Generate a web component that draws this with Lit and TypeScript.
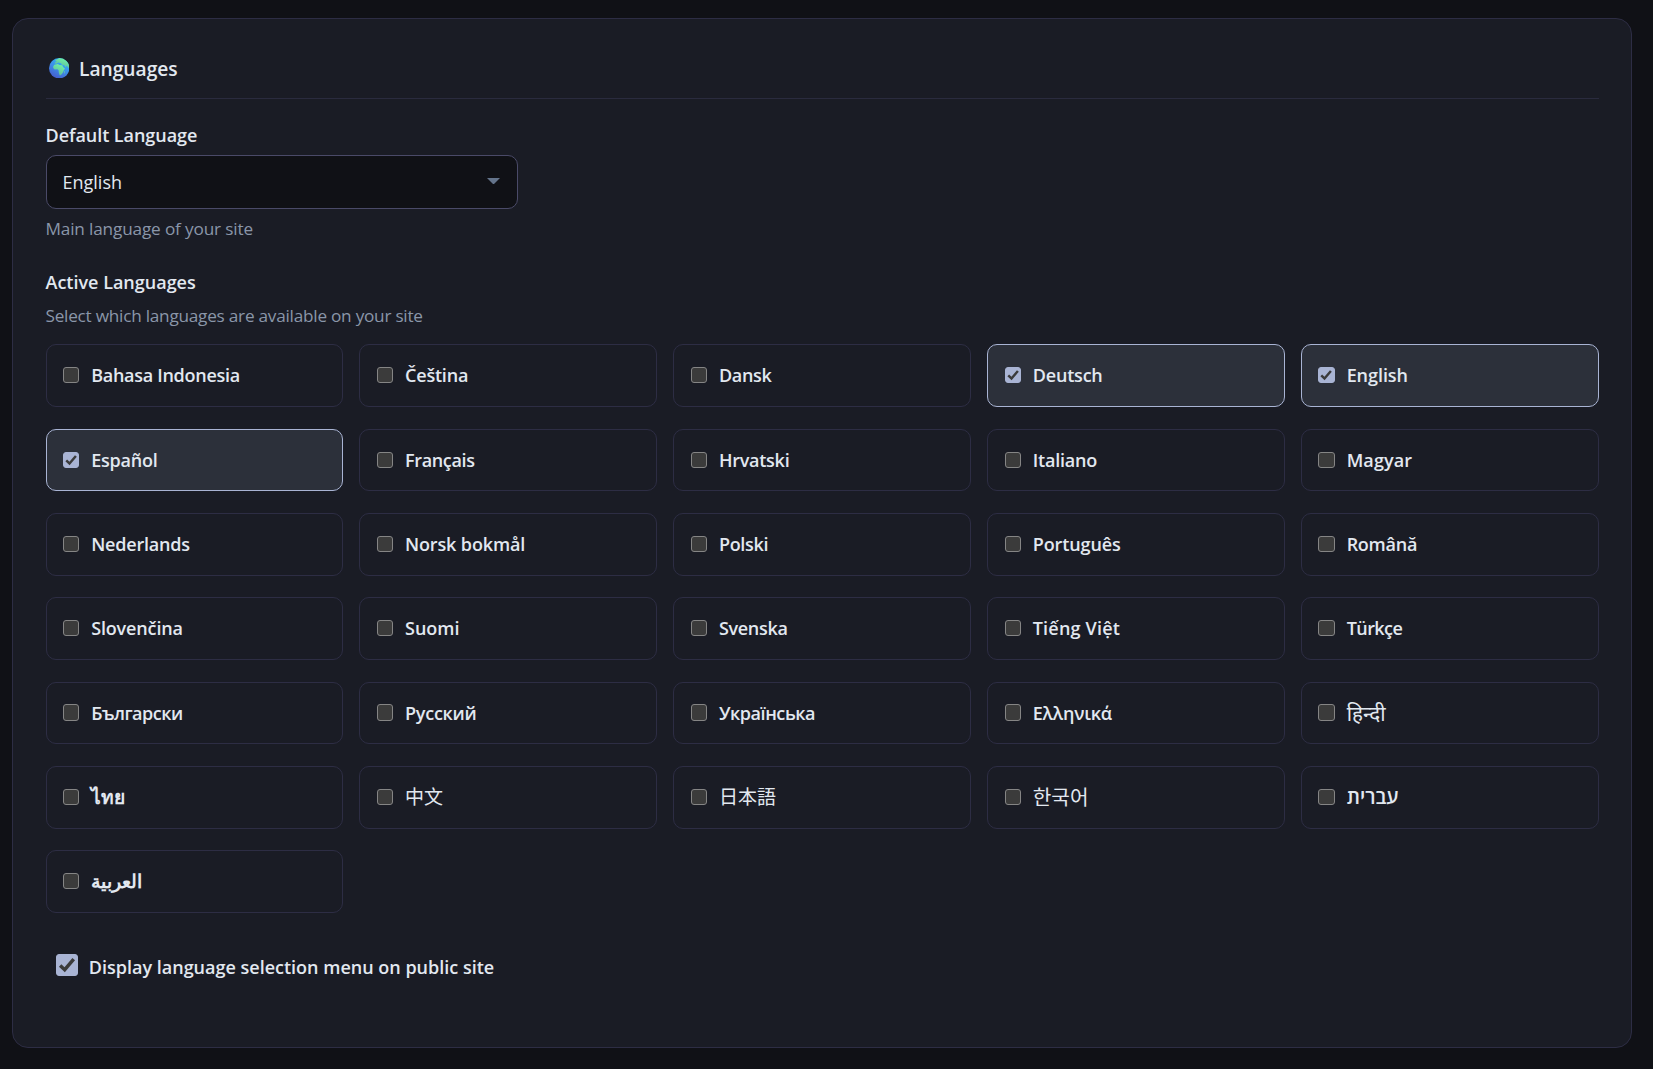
import { LitElement, html, css, svg, nothing } from "lit";
import { customElement, property } from "lit/decorators.js";
import { classMap } from "lit/directives/class-map.js";
import { styleMap } from "lit/directives/style-map.js";

interface Language {
  name: string;
  tracking?: number;
  size?: number;
  regular?: boolean;
  active?: boolean;
  lang?: string;
}

const LANGUAGES: Language[] = [
  { name: "Bahasa Indonesia", tracking: -0.28 },
  { name: "Čeština", tracking: -0.2 },
  { name: "Dansk", tracking: -0.3 },
  { name: "Deutsch", tracking: -0.2, active: true },
  { name: "English", tracking: -0.05, active: true },
  { name: "Español", tracking: -0.2, active: true },
  { name: "Français", tracking: -0.35 },
  { name: "Hrvatski", tracking: -0.25 },
  { name: "Italiano", tracking: -0.2 },
  { name: "Magyar", tracking: 0.12 },
  { name: "Nederlands", tracking: -0.2 },
  { name: "Norsk bokmål", tracking: -0.13 },
  { name: "Polski", tracking: -0.3 },
  { name: "Português", tracking: -0.12 },
  { name: "Română", tracking: -0.25 },
  { name: "Slovenčina", tracking: -0.14 },
  { name: "Suomi" },
  { name: "Svenska", tracking: -0.3 },
  { name: "Tiếng Việt", tracking: 0.2 },
  { name: "Türkçe", tracking: -0.55 },
  { name: "Български", tracking: -0.5 },
  { name: "Русский", tracking: -0.25 },
  { name: "Українська", tracking: -0.43 },
  { name: "Ελληνικά", tracking: -0.2 },
  { name: "हिन्दी", size: 20.6, regular: true, lang: "hi" },
  { name: "ไทย", size: 19.2, lang: "th" },
  { name: "中文", size: 19, regular: true, lang: "zh" },
  { name: "日本語", size: 19, regular: true, lang: "ja" },
  { name: "한국어", size: 20.2, regular: true, lang: "ko" },
  { name: "עברית", size: 19.9, lang: "he" },
  { name: "العربية", size: 19.2, lang: "ar" },
];

@customElement("check-box")
export class CheckBox extends LitElement {
  @property({ type: Boolean }) checked = false;

  static styles = css`
    :host {
      display: block;
      flex: none;
      width: 16.25px;
      height: 16.25px;
    }
    .box {
      box-sizing: border-box;
      width: 100%;
      height: 100%;
      border: 1px solid #858585;
      border-radius: 3px;
      background: #3b3b3b;
    }
    .box.on {
      border-color: #a9b4d4;
      background: #a9b4d4;
    }
    .tick {
      display: block;
      width: 100%;
      height: 100%;
    }
  `;

  render() {
    return html`<div class=${classMap({ box: true, on: this.checked })}>
      ${this.checked
        ? html`<svg class="tick" viewBox="0 0 14 14">
            <path d="M2.2 7.3 5.4 10.3 11.7 2.9" fill="none" stroke="#3b3b3b" stroke-width="2.4" />
          </svg>`
        : nothing}
    </div>`;
  }
}

const globe = svg`
  <defs>
    <linearGradient id="sea" x1="0.75" y1="0.1" x2="0.3" y2="0.95">
      <stop offset="0" stop-color="#2fb4f6" />
      <stop offset="0.5" stop-color="#3d8ee8" />
      <stop offset="1" stop-color="#4560cf" />
    </linearGradient>
    <linearGradient id="land" x1="0.8" y1="0" x2="0.3" y2="1">
      <stop offset="0" stop-color="#72f7a8" />
      <stop offset="1" stop-color="#5cb899" />
    </linearGradient>
    <clipPath id="disc"><circle cx="10" cy="10" r="10" /></clipPath>
  </defs>
  <circle cx="10" cy="10" r="10" fill="url(#sea)" />
  <g clip-path="url(#disc)" fill="url(#land)">
    <path d="M6 3.1 7 1.7 8.6 1 10.2 0 17 0 20 4 20 9.6 18.7 9.5 18.2 8.3 17.2 7.4 16.5 9.3 15.6 8.2 15 7 13.6 6.8 12.4 6.3 11.8 5.2 10.6 4.9 9.5 4.3 8 4.8 7.3 5.7 5.7 5.5 5.7 4.3 7.3 4 7.6 3.3Z" />
    <path d="M5.3 6.5 8.7 6 10.2 6.8 13 7 14 9.1 15.7 10.2 14.4 12.2 13.7 14.2 12.6 15.6 11.4 17 10.4 16.8 9.7 14.4 9.4 12 8.2 11.1 5.6 11.2 4.1 9.8 4.2 8Z" />
    <path d="M15.1 13.3 15.8 12.8 15.4 15.1 14.7 15.4Z" />
  </g>
`;

@customElement("app-root")
export class AppRoot extends LitElement {
  static styles = css`
    :host {
      display: block;
      box-sizing: border-box;
      height: 1069px;
      padding: 18px 21px 21px 12px;
      background: #101116;
      color: #e2e8f0;
      font-family: "Open Sans", "Noto Sans", "Liberation Sans", sans-serif;
      font-size: 18px;
      line-height: 26px;
      overflow: hidden;
    }
    .panel {
      box-sizing: border-box;
      height: 1030px;
      padding: 33.5px 32.4px 0 32.5px;
      border: 1px solid #2d2d44;
      border-radius: 16px;
      background: #1a1c25;
    }
    .header {
      box-sizing: border-box;
      display: flex;
      align-items: flex-start;
      gap: 9.7px;
      height: 46.5px;
      padding-left: 3.4px;
      border-bottom: 1px solid #2a2b3e;
    }
    .globe {
      width: 20.4px;
      height: 20.4px;
      margin-top: 5px;
    }
    .title {
      margin: 0;
      font-size: 19.2px;
      line-height: 31px;
      font-weight: 600;
    }
    .label {
      font-weight: 600;
    }
    .default {
      margin-top: 23px;
      letter-spacing: -0.05px;
    }
    .select {
      box-sizing: border-box;
      display: flex;
      align-items: center;
      justify-content: space-between;
      width: 472px;
      height: 54px;
      margin-top: 7px;
      padding: 0 16.7px 1px 16px;
      border: 1px solid #4a4a68;
      border-radius: 10px;
      background: #101116;
    }
    .arrow {
      width: 13px;
      height: 6.5px;
      margin-bottom: 0.6px;
    }
    .hint {
      color: #8a96a9;
      font-size: 17.2px;
      letter-spacing: -0.16px;
    }
    .hint.main {
      margin-top: 7px;
    }
    .active {
      margin-top: 27px;
    }
    .hint.pick {
      margin-top: 8px;
      letter-spacing: -0.24px;
    }
    .grid {
      display: grid;
      grid-template-columns: repeat(5, 1fr);
      grid-auto-rows: 62.65px;
      gap: 21.68px 16.25px;
      margin-top: 15.35px;
    }
    .card {
      box-sizing: border-box;
      display: flex;
      align-items: center;
      gap: 11.9px;
      padding: 0 0 0.6px 16.5px;
      border: 1px solid #2d2d44;
      border-radius: 10px;
    }
    .card.on {
      border-color: #a9b4d4;
      background: #2c303a;
    }
    .name {
      font-family: "Open Sans", "Noto Sans", "Noto Sans CJK SC", sans-serif;
      font-weight: 600;
      white-space: nowrap;
    }
    .name.regular {
      font-weight: 400;
    }
    .toggle {
      display: flex;
      align-items: flex-start;
      gap: 10.8px;
      margin-top: 41px;
      padding-left: 10.5px;
    }
    .large {
      width: 22px;
      height: 22px;
      margin-top: 0.5px;
    }
  `;

  private card(l: Language) {
    return html`<label class=${classMap({ card: true, on: !!l.active })}>
      <check-box ?checked=${!!l.active}></check-box>
      <span
        class=${classMap({ name: true, regular: !!l.regular })}
        lang=${l.lang ?? nothing}
        style=${styleMap({
          letterSpacing: l.tracking ? `${l.tracking}px` : undefined,
          fontSize: l.size ? `${l.size}px` : undefined,
        })}
        >${l.name}</span
      >
    </label>`;
  }

  render() {
    return html`<section class="panel">
      <header class="header">
        <svg class="globe" viewBox="0 0 20 20">${globe}</svg>
        <h2 class="title">Languages</h2>
      </header>
      <div class="label default">Default Language</div>
      <div class="select">
        <span>English</span>
        <svg class="arrow" viewBox="0 0 13 6.5"><path d="M0 0H13L6.5 6.5Z" fill="#64748b" /></svg>
      </div>
      <div class="hint main">Main language of your site</div>
      <div class="label active">Active Languages</div>
      <div class="hint pick">Select which languages are available on your site</div>
      <div class="grid">${LANGUAGES.map((l) => this.card(l))}</div>
      <div class="toggle">
        <check-box class="large" checked></check-box>
        <span class="label">Display language selection menu on public site</span>
      </div>
    </section>`;
  }
}
